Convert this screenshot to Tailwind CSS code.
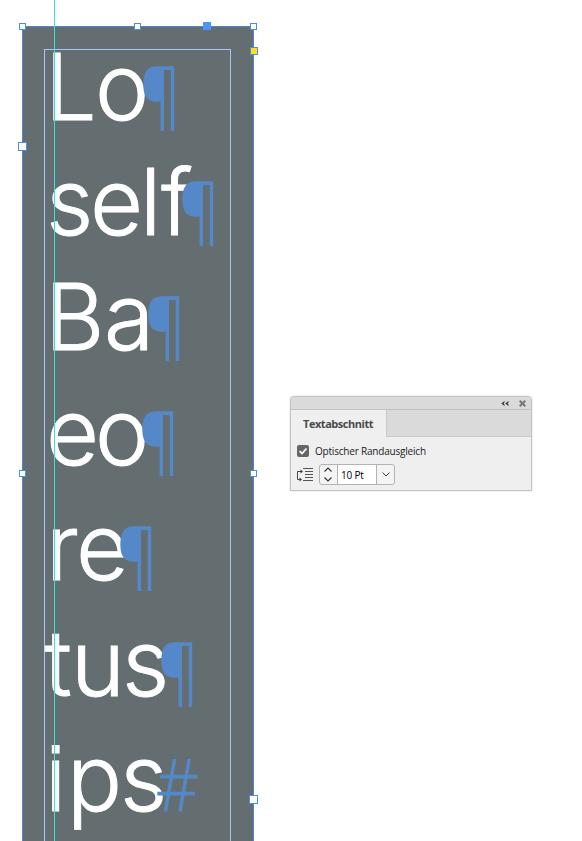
<!DOCTYPE html>
<html lang="de">
<head>
    <meta charset="UTF-8">
    <meta name="viewport" content="width=device-width, initial-scale=1.0">
    <title>Textabschnitt</title>
    <script src="https://cdn.jsdelivr.net/npm/@tailwindcss/browser@4"></script>
</head>
<body class="bg-white w-[582px] h-[841px] overflow-hidden flex font-['Open_Sans',sans-serif]">

    <!-- Document canvas with the selected text frame -->
    <svg class="w-[270px] h-[841px] shrink-0" viewBox="0 0 270 841">
        <rect x="22.5" y="26.5" width="231" height="830" fill="#646e70" stroke="#4c85d0"/>
        <rect x="44.5" y="49.5" width="186" height="830" fill="none" stroke="#a9c5f5"/>

        <!-- Story text -->
        <g class="fill-white stroke-white stroke-[0.9px] font-light font-['Inter',sans-serif] text-[91.5px] [font-feature-settings:'ss07']">
            <text x="45 95" y="119.5">Lo</text>
            <text x="46 90 140 161" y="234.5">self</text>
            <text x="45 104" y="349.5">Ba</text>
            <text x="46 95" y="464.5">eo</text>
            <text x="46 76" y="579.5">re</text>
            <text x="44.5 71 122" y="695.5">tus</text>
            <text x="45 67 120" y="810.5">ips</text>
        </g>

        <!-- Hidden characters -->
        <g class="fill-[#5588c8] font-['Open_Sans',sans-serif] text-[74px]">
            <text transform="translate(139.5 122) scale(.86 1)">¶</text>
            <text transform="translate(178.5 237) scale(.86 1)">¶</text>
            <text transform="translate(144.5 352) scale(.86 1)">¶</text>
            <text transform="translate(138.5 467) scale(.86 1)">¶</text>
            <text transform="translate(116.5 582) scale(.86 1)">¶</text>
            <text transform="translate(157.5 698) scale(.86 1)">¶</text>
            <text transform="translate(156 811) scale(.92 1)" class="font-light text-[72px] stroke-[#5588c8] stroke-[0.8px]">#</text>
        </g>

        <!-- Guide -->
        <path d="M54.5 0V841" stroke="#2ee6e0"/>

        <!-- Frame handles -->
        <g fill="#fff" stroke="#4c8fe0">
            <rect x="19.5" y="23.5" width="6" height="6"/>
            <rect x="134.5" y="23.5" width="6" height="6"/>
            <rect x="250.5" y="23.5" width="6" height="6"/>
            <rect x="19.5" y="470.5" width="6" height="6"/>
            <rect x="250.5" y="470.5" width="6" height="6"/>
            <rect x="18.5" y="142.5" width="8" height="8"/>
            <rect x="249.5" y="795.5" width="8" height="8"/>
            <rect x="203.5" y="22.5" width="7" height="7" fill="#4c95fa" stroke="#4c95fa"/>
            <rect x="250.5" y="47.5" width="7" height="7" fill="#fbe116"/>
        </g>
    </svg>

    <!-- Story panel -->
    <section class="ml-5 mt-[396px] w-[242px] h-[95px] flex flex-col bg-[#efefef] border border-[#c3c3c3] rounded-t-[4px] shadow-[0_0_2px_rgba(0,0,0,0.2)] text-[#222]">
        <div class="h-[13px] shrink-0 bg-[#dadada] border-b border-[#c3c3c3] rounded-t-[3px] flex items-center justify-end gap-[10px] pt-px pr-[5px]">
            <svg class="w-2 h-[5px]" viewBox="0 0 8 5" fill="#333"><path d="M3.5 0V1.5L2.5 2.5L3.5 3.5V5L.3 2.5ZM7.5 0V1.5L6.5 2.5L7.5 3.5V5L4.3 2.5Z"/></svg>
            <svg class="w-[7px] h-[7px]" viewBox="0 0 7 7" stroke="#777" stroke-width="2"><path d="M.7.7L6.3 6.3M6.3.7L.7 6.3"/></svg>
        </div>
        <div class="h-[27px] shrink-0 flex">
            <h2 class="w-[96px] pl-3 border-r border-[#c9c9c9] text-[11px] leading-[28px] font-bold tracking-[-0.46px] text-[#4a4a4a] whitespace-nowrap">Textabschnitt</h2>
            <div class="grow bg-[#dadada] border-b border-[#c9c9c9]"></div>
        </div>
        <label class="mt-[8px] ml-[6px] h-3 flex items-center">
            <svg class="w-3 h-3 mr-[6px]" viewBox="0 0 12 12"><rect width="12" height="12" rx="2" fill="#666"/><path d="M2.5 6L5 8.5L9.5 3.5" fill="none" stroke="#fff" stroke-width="1.7"/></svg>
            <span class="text-[10px] leading-[13px] tracking-[-0.2px] whitespace-nowrap">Optischer Randausgleich</span>
        </label>
        <div class="mt-[7px] ml-[6px] flex items-center">
            <svg class="w-[17px] h-[15px] mr-[5px]" viewBox="0 0 17 15" fill="none" stroke="#444"><path d="M6 1.5H16M8 4.5H16M8 7.5H16M8 10.5H16M6 13.5H16" stroke="#555"/><path d="M5 4.5H.5V12.5H4"/><path d="M3.5 2.5L6 4.5L3.5 6.5ZM2.5 10.5L5 12.5L2.5 14.5Z" fill="#444" stroke="none"/></svg>
            <div class="w-[76px] h-[21px] flex rounded-[3px] border border-[#b3b3b3] bg-[#f4f4f4] overflow-hidden">
                <div class="w-[17px] pr-px flex items-center justify-center">
                    <svg class="w-2 h-[15px]" viewBox="0 0 8 15" fill="none" stroke="#333" stroke-width="1.1"><path d="M.5 4.5L4 1L7.5 4.5M.5 10.5L4 14L7.5 10.5"/></svg>
                </div>
                <span class="w-[40px] pl-[3px] border-x border-[#b3b3b3] bg-white text-black text-[10px] leading-[21px] tracking-[-0.2px] whitespace-nowrap">10 Pt</span>
                <div class="grow flex items-center justify-center">
                    <svg class="w-2 h-[5px]" viewBox="0 0 8 5" fill="none" stroke="#444"><path d="M.5 .5L4 4L7.5 .5"/></svg>
                </div>
            </div>
        </div>
    </section>
</body>
</html>
